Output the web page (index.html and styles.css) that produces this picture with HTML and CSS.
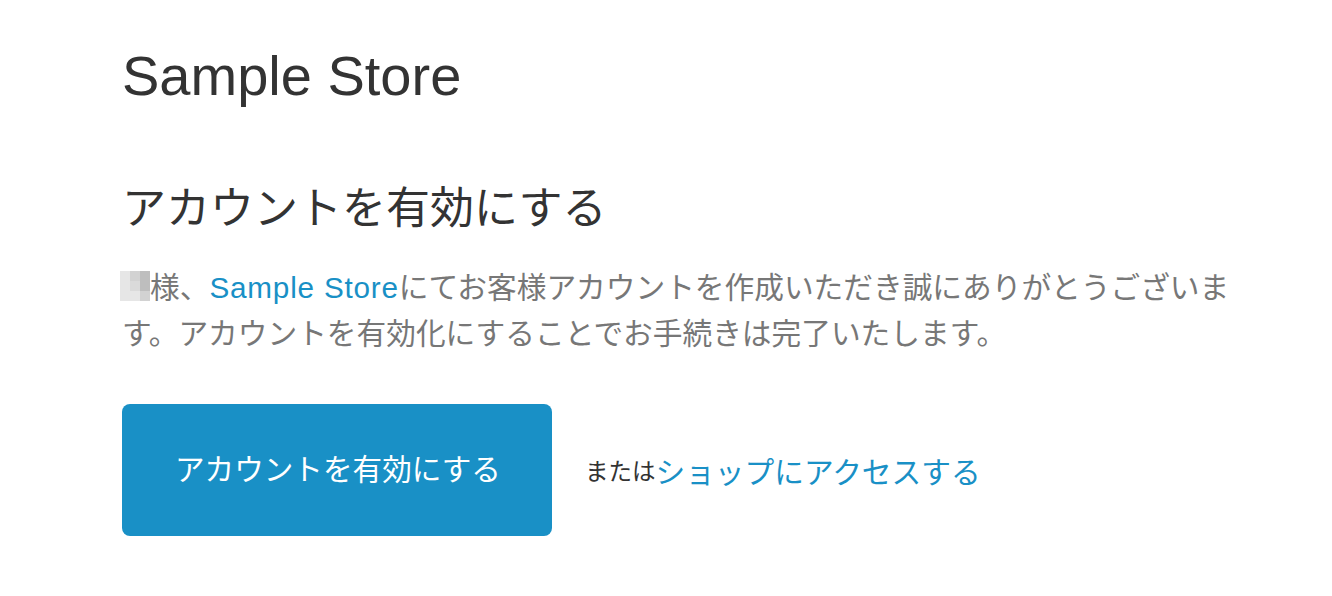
FILE: index.html
```html
<!DOCTYPE html>
<html lang="ja">
<head>
  <meta charset="UTF-8" />
  <meta name="viewport" content="width=device-width, initial-scale=1.0"/>
  <title>アカウントを有効にする</title>
  <link rel="stylesheet" href="styles.css">
</head>
<body>
  <div class="contenedor">
    <h1 class="tienda">Sample Store</h1>
    <h2 class="titulo">アカウントを有効にする</h2>
    <p class="texto"><span class="nombre"><i class="c1"></i><i class="c2"></i><i class="c3"></i><i class="c1"></i><i class="c4"></i><i class="c3"></i><i class="c1"></i><i class="c1"></i><i class="c2"></i></span>様、<a class="enlace" href="#">Sample Store</a>にてお客様アカウントを作成いただき誠にありがとうございます。アカウントを有効化にすることでお手続きは完了いたします。</p>
    <div class="acciones">
      <a class="boton" href="#">アカウントを有効にする</a>
      <span class="o">または</span><a class="enlace enlace-tienda" href="#">ショップにアクセスする</a>
    </div>
  </div>
</body>
</html>
```

FILE: styles.css
```css
body {
  margin: 0;
  background: #ffffff;
  font-family: 'Liberation Sans', 'Noto Sans CJK JP', sans-serif;
  color: #333333;
}

.contenedor {
  width: 1110px;
  padding: 36px 0 0 122px;
}

.tienda {
  margin: 0;
  font-size: 56px;
  font-weight: normal;
  line-height: 80px;
  color: #333333;
}

.titulo {
  margin: 61px 0 0;
  font-size: 44px;
  font-weight: normal;
  line-height: 64px;
  color: #333333;
}

.texto {
  margin: 24px 0 0;
  font-size: 29.7px;
  line-height: 46px;
  color: #777777;
}

.texto .enlace {
  letter-spacing: 0.8px;
}

.nombre {
  display: inline-block;
  width: 30px;
  height: 30px;
  margin-left: -2px;
  overflow: hidden;
  vertical-align: -3px;
}

.nombre i {
  display: block;
  float: left;
  width: 10px;
  height: 10px;
}

.c1 { background: #e6e6e6; }
.c2 { background: #d2d2d2; }
.c3 { background: #bebebe; }
.c4 { background: #dadada; }

.enlace {
  color: #1990c6;
  text-decoration: none;
}

.acciones {
  display: flex;
  align-items: center;
  margin-top: 47px;
}

.boton {
  display: block;
  width: 430px;
  height: 132px;
  box-sizing: border-box;
  padding-left: 53px;
  line-height: 132px;
  background: #1990c6;
  border-radius: 8px;
  color: #ffffff;
  font-size: 29.6px;
  text-decoration: none;
}

.o {
  margin-left: 33px;
  font-size: 23.5px;
  color: #333333;
}

.enlace-tienda {
  font-size: 29.7px;
}
```
